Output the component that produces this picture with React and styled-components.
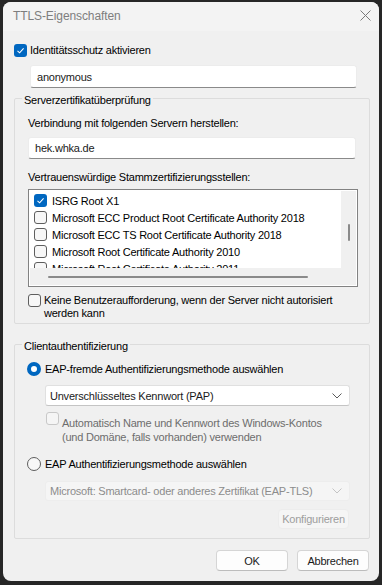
import React from "react";
import styled, { createGlobalStyle, css } from "styled-components";

const Global = createGlobalStyle`
  html, body {
    margin: 0;
    padding: 0;
    background: #262626;
  }
  body {
    font-family: "Segoe UI", "Liberation Sans", Arial, sans-serif;
    font-size: 11px;
    letter-spacing: -0.22px;
    color: #000;
  }
`;

const certs = [
  { name: "ISRG Root X1", checked: true },
  { name: "Microsoft ECC Product Root Certificate Authority 2018" },
  { name: "Microsoft ECC TS Root Certificate Authority 2018" },
  { name: "Microsoft Root Certificate Authority 2010" },
  { name: "Microsoft Root Certificate Authority 2011" },
];

function CheckMark() {
  return (
    <svg width="9" height="9" viewBox="0 0 9 9">
      <path d="M1.5 4.8 L3.6 6.8 L7.6 2.3" fill="none" stroke="#fff" strokeWidth="1.1" />
    </svg>
  );
}

function Chevron({ color }) {
  return (
    <svg width="10" height="6" viewBox="0 0 10 6">
      <path d="M0.5 0.5 L5 5 L9.5 0.5" fill="none" stroke={color} strokeWidth="1" />
    </svg>
  );
}

function App() {
  return (
    <>
      <Global />
      <Window>
        <TitleBar>
          <Title>TTLS-Eigenschaften</Title>
          <svg width="11" height="11" viewBox="0 0 11 11">
            <path d="M0.5 0.5 L10.5 10.5 M10.5 0.5 L0.5 10.5" stroke="#7a7a7a" strokeWidth="1" />
          </svg>
        </TitleBar>
        <Body>
          <CheckRow>
            <Box checked>
              <CheckMark />
            </Box>
            <Label>Identitätsschutz aktivieren</Label>
          </CheckRow>
          <TextField $indent={16} $width={327} $height={23} $top={8}>
            anonymous
          </TextField>

          <Group $top={1} $bottom={3}>
            <Legend>Serverzertifikatüberprüfung</Legend>
            <Label>Verbindung mit folgenden Servern herstellen:</Label>
            <TextField $width={328} $height={22} $top={7}>
              hek.whka.de
            </TextField>
            <Label $top={11}>Vertrauenswürdige Stammzertifizierungsstellen:</Label>
            <ListBox>
              <ListMain>
                <Items>
                  {certs.map((c) => (
                    <Item key={c.name}>
                      <Box checked={c.checked}>{c.checked && <CheckMark />}</Box>
                      <span>{c.name}</span>
                    </Item>
                  ))}
                </Items>
                <VScroll>
                  <VThumb />
                </VScroll>
              </ListMain>
              <HScroll>
                <HThumb />
              </HScroll>
            </ListBox>
            <CheckRow $top={7} $align="flex-start">
              <Box />
              <MultiLabel>
                Keine Benutzeraufforderung, wenn der Server nicht autorisiert
                <br />
                werden kann
              </MultiLabel>
            </CheckRow>
          </Group>

          <Group $top={11} $bottom={9}>
            <Legend>Clientauthentifizierung</Legend>
            <RadioRow>
              <Radio checked />
              <Label>EAP-fremde Authentifizierungsmethode auswählen</Label>
            </RadioRow>
            <Select $top={9}>
              <span>Unverschlüsseltes Kennwort (PAP)</span>
              <Chevron color="#5a5a5a" />
            </Select>
            <CheckRow $top={10} $indent={18} $align="flex-start">
              <Box disabled />
              <MultiLabel disabled $line={14}>
                Automatisch Name und Kennwort des Windows-Kontos
                <br />
                (und Domäne, falls vorhanden) verwenden
              </MultiLabel>
            </CheckRow>
            <RadioRow $top={13}>
              <Radio />
              <Label>EAP Authentifizierungsmethode auswählen</Label>
            </RadioRow>
            <Select disabled $top={10}>
              <span>Microsoft: Smartcard- oder anderes Zertifikat (EAP-TLS)</span>
              <Chevron color="#c4c4c4" />
            </Select>
            <ConfigRow>
              <Button disabled>Konfigurieren</Button>
            </ConfigRow>
          </Group>

          <Footer>
            <Button $wide>OK</Button>
            <Button $wide>Abbrechen</Button>
          </Footer>
        </Body>
      </Window>
    </>
  );
}

const Window = styled.div`
  margin: 2px 0 0 3px;
  width: 376px;
  height: 579px;
  background: #f0f0f0;
  border-radius: 8px;
  overflow: hidden;
  display: flex;
  flex-direction: column;
  & > * {
    flex-shrink: 0;
  }
`;

const TitleBar = styled.div`
  height: 29px;
  background: #f3f3f3;
  display: flex;
  align-items: center;
  justify-content: space-between;
  padding: 0 8px 0 10px;
  svg {
    margin-top: -2px;
  }
`;

const Title = styled.div`
  color: #7e7e7e;
  font-size: 12px;
  letter-spacing: -0.1px;
  margin-top: -1px;
`;

const Body = styled.div`
  display: flex;
  flex-direction: column;
  padding: 12px 9px 0 11px;
  & > * {
    flex-shrink: 0;
  }
`;

const Label = styled.div`
  line-height: 14px;
  white-space: nowrap;
  margin-top: ${(p) => p.$top || 0}px;
  color: ${(p) => (p.disabled ? "#6d6d6d" : "#000")};
`;

const MultiLabel = styled(Label)`
  margin-top: 0;
  line-height: ${(p) => p.$line || 13}px;
`;

const CheckRow = styled.div`
  display: flex;
  align-items: ${(p) => p.$align || "center"};
  gap: 3px;
  margin-top: ${(p) => p.$top || 0}px;
  margin-left: ${(p) => p.$indent || 0}px;
`;

const Box = styled.div`
  width: 13px;
  height: 13px;
  box-sizing: border-box;
  border-radius: 3px;
  flex-shrink: 0;
  display: flex;
  align-items: center;
  justify-content: center;
  ${(p) =>
    p.checked
      ? css`
          background: #0067c0;
        `
      : p.disabled
      ? css`
          border: 1px solid #c8c8c8;
          background: #f5f5f5;
          margin-top: -4px;
        `
      : css`
          border: 1px solid #5e5e5e;
          background: #f7f7f7;
        `}
`;

const RadioRow = styled.div`
  display: flex;
  align-items: center;
  gap: 4px;
  margin-top: ${(p) => p.$top || 0}px;
  margin-left: -1px;
`;

const Radio = styled.div`
  width: 14px;
  height: 14px;
  box-sizing: border-box;
  border-radius: 50%;
  flex-shrink: 0;
  ${(p) =>
    p.checked
      ? css`
          border: 4px solid #0067c0;
          background: #fff;
        `
      : css`
          border: 1px solid #5e5e5e;
          background: #f7f7f7;
        `}
`;

const TextField = styled.div`
  box-sizing: border-box;
  width: ${(p) => p.$width}px;
  height: ${(p) => p.$height}px;
  margin-left: ${(p) => p.$indent || 0}px;
  margin-top: ${(p) => p.$top || 0}px;
  background: #fff;
  border: 1px solid #ececec;
  border-bottom-color: #8a8a8a;
  border-radius: 3px;
  padding: 0 6px;
  display: flex;
  align-items: center;
  color: #1a1a1a;
`;

const Group = styled.fieldset`
  margin: ${(p) => p.$top}px 0 0 0;
  border: 1px solid #dcdcdc;
  border-radius: 2px;
  padding: 9px 13px ${(p) => p.$bottom}px 13px;
  display: flex;
  flex-direction: column;
  min-width: 0;
`;

const Legend = styled.legend`
  padding: 4px 2px 0 2px;
  margin-left: -6px;
  line-height: 14px;
`;

const ListBox = styled.div`
  margin-top: 5px;
  width: 330px;
  box-sizing: border-box;
  border: 1px solid #828282;
  padding: 1px;
  background: #fff;
`;

const ListMain = styled.div`
  display: flex;
  height: 77px;
`;

const Items = styled.div`
  flex: 1;
  overflow: hidden;
  background: #fff;
  padding: 1px 0 0 4px;
`;

const Item = styled.div`
  display: flex;
  align-items: center;
  gap: 5px;
  height: 17px;
  white-space: nowrap;
`;

const VScroll = styled.div`
  width: 15px;
  background: #f0f0f0;
  display: flex;
  justify-content: center;
`;

const VThumb = styled.div`
  width: 2px;
  height: 17px;
  margin-top: 33px;
  background: #8a8a8a;
  border-radius: 1px;
`;

const HScroll = styled.div`
  height: 17px;
  background: #f0f0f0;
  display: flex;
  align-items: center;
`;

const HThumb = styled.div`
  margin-left: 18px;
  width: 260px;
  height: 2px;
  background: #8a8a8a;
  border-radius: 1px;
`;

const Select = styled.div`
  box-sizing: border-box;
  width: 305px;
  height: ${(p) => (p.disabled ? 20 : 21)}px;
  margin-top: ${(p) => p.$top || 0}px;
  margin-left: 17px;
  background: ${(p) => (p.disabled ? "#f5f5f5" : "#fff")};
  border: 1px solid ${(p) => (p.disabled ? "#ededed" : "#e0e0e0")};
  border-bottom-color: ${(p) => (p.disabled ? "#ededed" : "#c4c4c4")};
  border-radius: 3px;
  padding: 0 7px 0 4px;
  display: flex;
  align-items: center;
  justify-content: space-between;
  white-space: nowrap;
  color: ${(p) => (p.disabled ? "#8c8c8c" : "#1a1a1a")};
`;

const ConfigRow = styled.div`
  display: flex;
  justify-content: flex-end;
  margin-top: 8px;
  padding-right: 7px;
`;

const Button = styled.div`
  box-sizing: border-box;
  height: ${(p) => (p.$wide ? 21 : 20)}px;
  width: ${(p) => (p.$wide ? 72 : 71)}px;
  border-radius: 4px;
  display: flex;
  align-items: center;
  justify-content: center;
  ${(p) =>
    p.disabled
      ? css`
          background: #f5f5f5;
          border: 1px solid #ececec;
          color: #9d9d9d;
        `
      : css`
          background: #fdfdfd;
          border: 1px solid #d5d5d5;
          border-bottom-color: #bcbcbc;
          color: #1a1a1a;
        `}
`;

const Footer = styled.div`
  display: flex;
  justify-content: flex-end;
  gap: 9px;
  margin-top: 11px;
  padding-right: 1px;
`;

export default App;
